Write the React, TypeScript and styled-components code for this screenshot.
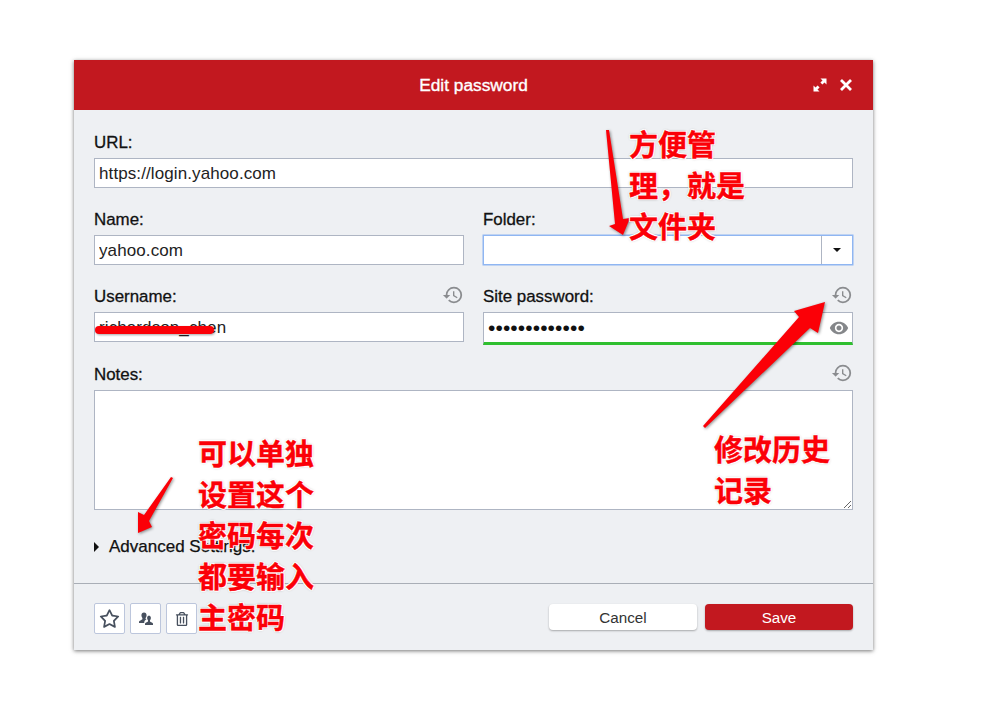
import React from "react";
import styled, { createGlobalStyle } from "styled-components";
import { MdHistory, MdRemoveRedEye } from "react-icons/md";
import { FaRegTrashAlt } from "react-icons/fa";
import { FaRegStar } from "react-icons/fa6";

const Global = createGlobalStyle`
  html, body { margin: 0; padding: 0; background: #fff; }
  body { font-family: "Liberation Sans", Arial, sans-serif; color: #111; }
`;

const Page = styled.div`
  position: relative;
  width: 981px;
  height: 702px;
  overflow: hidden;
  padding: 60px 0 0 74px;
  box-sizing: border-box;
`;

const Dialog = styled.section`
  width: 799px;
  height: 590px;
  background: #eef0f3;
  box-shadow: 0 1px 4px rgba(0, 0, 0, 0.55);
  display: flex;
  flex-direction: column;
`;

const Header = styled.header`
  position: relative;
  height: 50px;
  flex: none;
  background: #c2181f;
  color: #fff;
  display: flex;
  align-items: center;
  justify-content: center;
  font-size: 17.3px;
  font-weight: 500;
  -webkit-text-stroke: 0.35px #fff;
`;

const HeaderIcons = styled.div`
  position: absolute;
  right: 20px;
  top: 18px;
  display: flex;
  align-items: center;
  gap: 12px;
`;

const Body = styled.div`
  flex: 1;
  padding: 23px 20px 0;
  display: flex;
  flex-direction: column;
`;

const Row = styled.div`
  display: grid;
  grid-template-columns: 370px 370px;
  column-gap: 19px;
  margin-bottom: 22px;
`;

const NotesField = styled.div`
  display: flex;
  flex-direction: column;
  padding-top: 1px;
`;

const Field = styled.div<{ $wide?: boolean }>`
  display: flex;
  flex-direction: column;
  ${(p) => (p.$wide ? "grid-column: 1 / span 2;" : "")}
`;

const LabelRow = styled.div`
  height: 17px;
  margin-bottom: 8px;
  display: flex;
  align-items: center;
  justify-content: space-between;
`;

const Label = styled.label`
  font-size: 16.9px;
  font-weight: 500;
  color: #111;
  padding-top: 2px;
  -webkit-text-stroke: 0.3px #111;
`;

const History = styled(MdHistory)`
  color: #8a8c8f;
  width: 22px;
  height: 22px;
  margin: -2px 0 0 0;
`;

const InputBox = styled.div<{ $focus?: boolean; $strong?: boolean }>`
  position: relative;
  box-sizing: border-box;
  height: 30px;
  background: #fff;
  border: 1px solid ${(p) => (p.$focus ? "#8fb6f2" : "#aeb5c3")};
  display: flex;
  align-items: center;
  ${(p) => (p.$focus ? "box-shadow: 0 0 0 0.5px #8fb6f2;" : "")}
  ${(p) => (p.$strong ? "border-bottom: 3px solid #2fbf2f; height: 33px; margin-bottom: -3px;" : "")}
`;

const TextInput = styled.input`
  flex: 1;
  min-width: 0;
  height: 100%;
  box-sizing: border-box;
  border: 0;
  outline: 0;
  background: transparent;
  padding: 2px 4px 0;
  font: 17px "Liberation Sans", Arial, sans-serif;
  letter-spacing: 0.1px;
  color: #222;
`;

const SecretInput = styled(TextInput)`
  font-size: 21px;
  color: #111;
  padding: 0 4px;
`;

const Dropdown = styled.div`
  flex: none;
  width: 30px;
  height: 100%;
  border-left: 1px solid #aeb5c3;
  display: flex;
  align-items: center;
  justify-content: center;
  &::after {
    content: "";
    border: 4px solid transparent;
    border-top: 4px solid #111;
    border-bottom: 0;
  }
`;

const Eye = styled(MdRemoveRedEye)`
  flex: none;
  width: 20px;
  height: 20px;
  margin-right: 3px;
  color: #85878a;
`;

const Notes = styled.textarea`
  display: block;
  width: 759px;
  height: 120px;
  box-sizing: border-box;
  border: 1px solid #aeb5c3;
  background: #fff;
  outline: 0;
  resize: vertical;
  margin: 0;
`;

const Advanced = styled.div`
  margin-top: 28px;
  height: 18px;
  display: flex;
  align-items: center;
  gap: 10px;
  font-size: 17px;
  -webkit-text-stroke: 0.25px #111;
  &::before {
    content: "";
    border: 5px solid transparent;
    border-left: 5px solid #111;
    border-right: 0;
  }
`;

const Footer = styled.footer`
  height: 67px;
  flex: none;
  box-sizing: border-box;
  border-top: 1px solid #a9aeb6;
  padding: 19px 20px 0;
  display: flex;
  justify-content: space-between;
  align-items: flex-start;
`;

const ToolGroup = styled.div`
  display: flex;
  gap: 5px;
`;

const ToolButton = styled.button`
  width: 31px;
  height: 31px;
  padding: 0;
  box-sizing: border-box;
  background: #fff;
  border: 1px solid #bcc6dc;
  border-radius: 2px;
  display: flex;
  align-items: center;
  justify-content: center;
  color: #47505e;
`;

const ActionGroup = styled.div`
  display: flex;
  gap: 8px;
  padding-top: 1px;
`;

const ActionButton = styled.button<{ $primary?: boolean }>`
  width: 148px;
  height: 26px;
  border: 0;
  border-radius: 4px;
  background: ${(p) => (p.$primary ? "#c2181f" : "#fff")};
  color: ${(p) => (p.$primary ? "#fff" : "#333")};
  font: 15.2px "Liberation Sans", Arial, sans-serif;
  box-shadow: 0 1px 2px rgba(0, 0, 0, 0.3);
`;

const Note = styled.div<{ $x: number; $y: number }>`
  position: absolute;
  left: ${(p) => p.$x}px;
  top: ${(p) => p.$y}px;
  font: 700 29px/41px "Noto Sans CJK SC", sans-serif;
  color: #fb0007;
  white-space: pre;
  pointer-events: none;
  -webkit-text-stroke: 0.4px #fb0007;
  text-shadow: 1px 0 0 #fff, -1px 0 0 #fff, 0 1px 0 #fff, 0 -1px 0 #fff, 1px 1px 0 #fff, -1px 1px 0 #fff, 1px -1px 0 #fff, -1px -1px 0 #fff, 0 0 3px rgba(0, 0, 0, 0.45);
`;

const Markup = styled.svg`
  position: absolute;
  left: 0;
  top: 0;
  width: 981px;
  height: 702px;
  pointer-events: none;
  overflow: visible;
`;

const Arrow = styled.polygon`
  fill: #fb0007;
  filter: drop-shadow(1px 1px 1.5px rgba(0, 0, 0, 0.45));
`;

const Strike = styled.rect`
  fill: #fb0007;
  filter: drop-shadow(1px 1px 1px rgba(0, 0, 0, 0.35));
`;

export default function App() {
  return (
    <Page>
      <Global />
      <Dialog>
        <Header>
          Edit password
          <HeaderIcons>
            <svg width="14" height="14" viewBox="0 0 14 14" fill="#fff" aria-hidden>
              <path d="M7.500 .5h6v6l-2-2-2.100 2.100-2-2L9.500 2.500zM6.500 13.500h-6v-6l2 2 2.100-2.100 2 2L4.500 11.500z" />
            </svg>
            <svg width="14" height="14" viewBox="0 0 14 14" stroke="#fff" strokeWidth="2.8" aria-hidden>
              <path d="M2 2l10 10M12 2L2 12" />
            </svg>
          </HeaderIcons>
        </Header>
        <Body>
          <Row>
            <Field $wide>
              <LabelRow><Label>URL:</Label></LabelRow>
              <InputBox><TextInput readOnly value="https://login.yahoo.com" /></InputBox>
            </Field>
          </Row>
          <Row>
            <Field>
              <LabelRow><Label>Name:</Label></LabelRow>
              <InputBox><TextInput readOnly value="yahoo.com" /></InputBox>
            </Field>
            <Field>
              <LabelRow><Label>Folder:</Label></LabelRow>
              <InputBox $focus><TextInput readOnly value="" /><Dropdown /></InputBox>
            </Field>
          </Row>
          <Row>
            <Field>
              <LabelRow><Label>Username:</Label><History /></LabelRow>
              <InputBox><TextInput readOnly value="richardson_chen" /></InputBox>
            </Field>
            <Field>
              <LabelRow><Label>Site password:</Label><History /></LabelRow>
              <InputBox $strong><SecretInput readOnly type="password" value="richardson123" /><Eye /></InputBox>
            </Field>
          </Row>
          <NotesField>
            <LabelRow><Label>Notes:</Label><History /></LabelRow>
            <Notes readOnly />
          </NotesField>
          <Advanced>Advanced Settings:</Advanced>
        </Body>
        <Footer>
          <ToolGroup>
            <ToolButton aria-label="Favorite"><FaRegStar size={21} /></ToolButton>
            <ToolButton aria-label="Share">
              <svg width="16" height="16" viewBox="0 0 16 16" fill="currentColor" aria-hidden>
                <path d="M6 1.500c1.600 0 2.600 1.200 2.600 2.800 0 1.100-.4 2-1 2.600v1.200l1 .5c-1 .3-1.900.9-2.200 1.900l-.2 1.500H1v-1.200c0-1 2.700-1.800 3.400-2.500V6.900c-.6-.6-1-1.500-1-2.600C3.400 2.700 4.400 1.500 6 1.500z" />
                <path d="M10.500 4.500c1.500 0 2.400 1.100 2.400 2.500 0 1-.4 1.800-.9 2.300v1.100c.8.700 3 1.200 3 2.300v1.300H7v-1.300c0-1.100 2.200-1.600 3-2.300V9.300c-.5-.5-.9-1.300-.9-2.300 0-1.400.9-2.500 2.400-2.500z" />
              </svg>
            </ToolButton>
            <ToolButton aria-label="Delete"><FaRegTrashAlt size={14} /></ToolButton>
          </ToolGroup>
          <ActionGroup>
            <ActionButton>Cancel</ActionButton>
            <ActionButton $primary>Save</ActionButton>
          </ActionGroup>
        </Footer>
      </Dialog>
      <Markup aria-hidden>
        <Strike x="95" y="326" width="119" height="8" rx="4" />
        <Arrow points="606,130 609,130 623,219 630,218 623,235 609,226 615,224" />
        <Arrow points="703,426 799,317 794,311 825,302 818,333 810,328 705,428" />
        <Arrow points="171,477 173,478 149,521 152,527 138,533 138,512 144,515" />
      </Markup>
      <Note $x={629} $y={123}>{"方便管\n理，就是\n文件夹"}</Note>
      <Note $x={198} $y={432}>{"可以单独\n设置这个\n密码每次\n都要输入\n主密码"}</Note>
      <Note $x={714} $y={428}>{"修改历史\n记录"}</Note>
    </Page>
  );
}
